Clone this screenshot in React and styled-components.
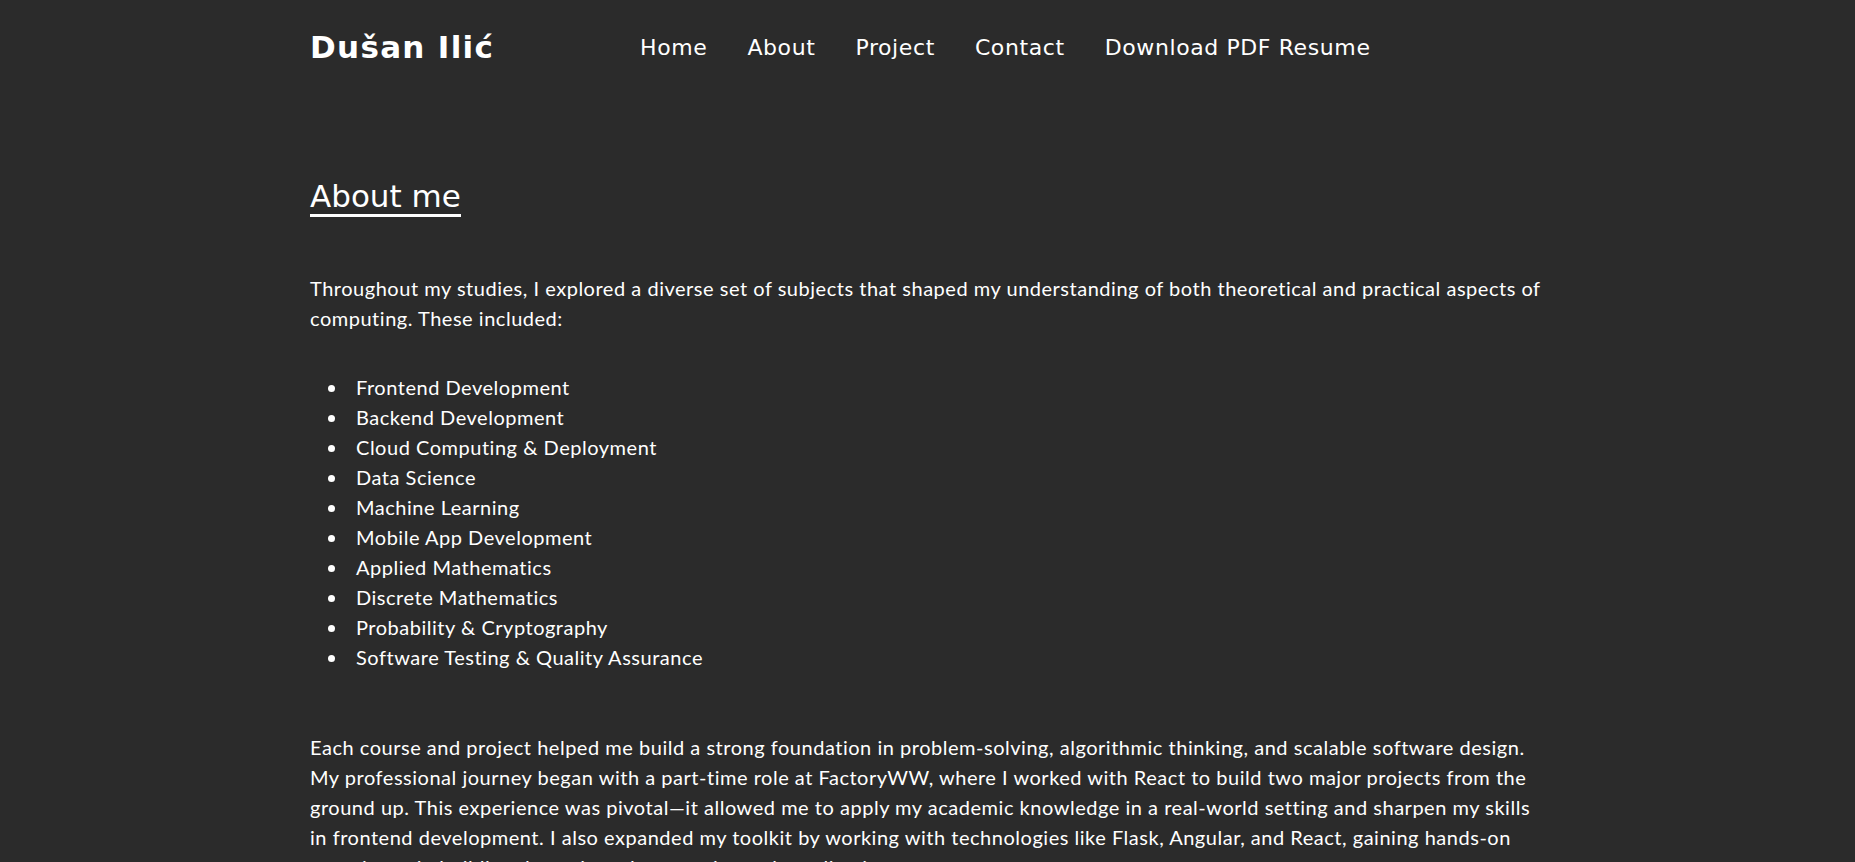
import React from "react";
import styled, { createGlobalStyle } from "styled-components";

const GlobalStyle = createGlobalStyle`
  body {
    margin: 0;
    background-color: #2b2b2b;
    color: #fff;
    font-family: "Lato", "Open Sans", sans-serif;
  }
`;

const Page = styled.div`
  width: 1235px;
  margin: 0 auto;
`;

const Header = styled.header`
  display: flex;
  align-items: center;
  height: 94px;
`;

const Logo = styled.div`
  width: 330px;
  font-family: "DejaVu Sans", sans-serif;
  font-weight: 700;
  font-size: 31px;
  letter-spacing: 1.3px;
`;

const Nav = styled.nav`
  display: flex;
  gap: 40px;
`;

const NavLink = styled.a`
  font-family: "DejaVu Sans", sans-serif;
  font-size: 22px;
  letter-spacing: 0.6px;
  color: #fff;
  text-decoration: none;
  cursor: pointer;
`;

const Main = styled.main`
  padding-top: 84px;
`;

const Heading = styled.h2`
  display: inline-block;
  margin: 0;
  font-family: "DejaVu Sans", sans-serif;
  font-weight: 400;
  font-size: 31px;
  line-height: 36px;
  border-bottom: 3px solid #fff;
`;

const Text = styled.p`
  margin: ${(p) => p.$top || 0}px 0 0;
  font-size: 20px;
  letter-spacing: 0.52px;
  line-height: 30px;
`;

const List = styled.ul`
  margin: 39px 0 0;
  padding-left: 38px;
  font-size: 20px;
  letter-spacing: 0.52px;
  line-height: 30px;
`;

const Item = styled.li`
  padding-left: 8px;
`;

const subjects = [
  "Frontend Development",
  "Backend Development",
  "Cloud Computing & Deployment",
  "Data Science",
  "Machine Learning",
  "Mobile App Development",
  "Applied Mathematics",
  "Discrete Mathematics",
  "Probability & Cryptography",
  "Software Testing & Quality Assurance",
];

const links = ["Home", "About", "Project", "Contact", "Download PDF Resume"];

export default function App() {
  return (
    <>
      <GlobalStyle />
      <Page>
        <Header>
          <Logo>Dušan Ilić</Logo>
          <Nav>
            {links.map((l) => (
              <NavLink key={l}>{l}</NavLink>
            ))}
          </Nav>
        </Header>
        <Main>
          <Heading>About me</Heading>
          <Text $top={56}>
            Throughout my studies, I explored a diverse set of subjects that shaped my understanding of both
            theoretical and practical aspects of computing. These included:
          </Text>
          <List>
            {subjects.map((s) => (
              <Item key={s}>{s}</Item>
            ))}
          </List>
          <Text $top={60}>
            Each course and project helped me build a strong foundation in problem-solving, algorithmic thinking,
            and scalable software design. My professional journey began with a part-time role at FactoryWW, where I
            worked with React to build two major projects from the ground up. This experience was pivotal—it
            allowed me to apply my academic knowledge in a real-world setting and sharpen my skills in frontend
            development. I also expanded my toolkit by working with technologies like Flask, Angular, and React,
            gaining hands-on experience in building dynamic and responsive web applications.
          </Text>
        </Main>
      </Page>
    </>
  );
}
